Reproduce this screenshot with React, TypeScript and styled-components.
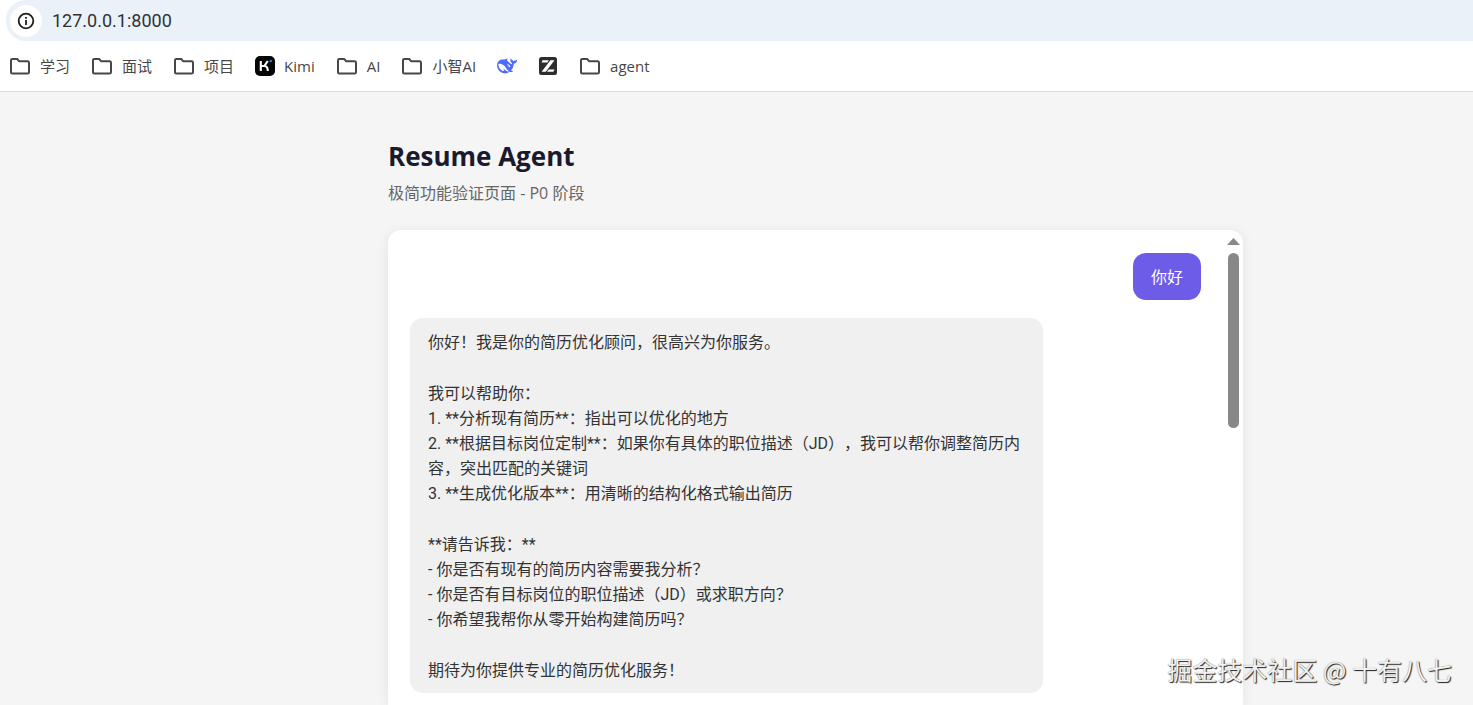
import React from "react";
import styled, { createGlobalStyle } from "styled-components";

const GlobalStyle = createGlobalStyle`
  *, *::before, *::after { box-sizing: border-box; }
  body {
    margin: 0;
    background: #f5f5f5;
    color: #333;
    font-family: "Open Sans", "Noto Sans CJK SC", sans-serif;
    font-size: 16px;
    line-height: 25px;
    text-spacing-trim: space-all;
  }
`;

const Page = styled.div`
  display: flex;
  flex-direction: column;
  height: 100vh;
  overflow: hidden;
`;

const AddressBar = styled.div`
  display: flex;
  align-items: center;
  gap: 10px;
  height: 41px;
  margin-left: 6px;
  padding-left: 4px;
  border-radius: 20px 0 0 20px;
  background: #ebf1f9;
`;

const Browser = styled.header`
  flex: none;
  background: #fff;
  border-bottom: 1px solid #dcdcdc;
`;

const InfoButton = styled.button`
  display: grid;
  place-items: center;
  width: 32px;
  height: 32px;
  padding: 0;
  border: 0;
  border-radius: 50%;
  background: #fff;
  color: #1f1f1f;
`;

const AddressInput = styled.input`
  flex: 1;
  min-width: 0;
  padding: 0;
  border: 0;
  outline: 0;
  background: transparent;
  color: #303236;
  font-family: Roboto, sans-serif;
  font-size: 18px;
`;

const Bookmarks = styled.nav`
  display: flex;
  align-items: center;
  gap: 21px;
  height: 50px;
  padding-left: 9px;
`;

const Bookmark = styled.a`
  display: flex;
  align-items: center;
  gap: 9px;
  color: #474747;
  font-size: 15px;
  text-decoration: none;
  white-space: nowrap;
`;

const Layout = styled.div`
  flex: 1;
  min-height: 0;
  display: grid;
  grid-template-columns: minmax(16px, 388px) minmax(0, 855px) minmax(16px, 1fr);
`;

const Main = styled.main`
  grid-column: 2;
  display: flex;
  flex-direction: column;
  min-height: 0;
  padding-top: 48px;
`;

const Title = styled.h1`
  margin: 0;
  color: #1a1a2e;
  font-size: 26px;
  line-height: 32px;
  font-weight: 700;
`;

const Subtitle = styled.p`
  margin: 9px 0 24px;
  color: #666;
`;

const ChatCard = styled.section`
  flex: 1;
  display: flex;
  min-height: 0;
  border-radius: 13px 13px 0 0;
  background: #fff;
  box-shadow: 0 2px 13px rgba(0, 0, 0, 0.08);
`;

const Messages = styled.div`
  flex: 1;
  min-width: 0;
  display: flex;
  flex-direction: column;
  gap: 18px;
  padding: 23px 22px 12px;
`;

const Bubble = styled.article<{ $own?: boolean }>`
  display: flex;
  flex-direction: column;
  gap: 26px;
  width: ${(p) => (p.$own ? "auto" : "80%")};
  align-self: ${(p) => (p.$own ? "flex-end" : "flex-start")};
  padding: 12px 18px 10px;
  border-radius: 13px;
  background: ${(p) => (p.$own ? "#6c5ce7" : "#f0f0f0")};
  color: ${(p) => (p.$own ? "#fff" : "#333")};
  font-family: Roboto, "Noto Sans CJK SC", sans-serif;
`;

const Paragraph = styled.p`
  margin: 0;
  white-space: pre-wrap;
`;

const ScrollTrack = styled.div`
  flex: none;
  width: 20px;
  display: flex;
  flex-direction: column;
  align-items: center;
  gap: 8px;
  padding-top: 8px;
`;

const ScrollThumb = styled.div`
  width: 11px;
  height: 175px;
  border-radius: 6px;
  background: #888;
`;

const Watermark = styled.div`
  position: absolute;
  right: 21px;
  bottom: 18px;
  color: #f0f0f0;
  font-family: "Noto Sans CJK SC", sans-serif;
  font-size: 25px;
  line-height: 36px;
  text-shadow: 1px 1px 1px #222, 0 0 1px #777;
  white-space: nowrap;
`;

const FolderIcon = () => (
  <svg width="22" height="18" viewBox="1 0 22 18" fill="none" stroke="#474747" strokeWidth="2" strokeLinejoin="round" aria-hidden="true">
    <path d="M3 3.2Q3 2 4.2 2H9.2L11.3 4.3H19.6Q21 4.3 21 5.7V15.3Q21 16.5 19.6 16.5H4.2Q3 16.5 3 15.3Z" />
  </svg>
);

const KimiIcon = () => (
  <svg width="20" height="20" viewBox="0 0 20 20" aria-hidden="true">
    <rect width="20" height="20" rx="5" fill="#050505" />
    <path d="M5.8 5V15M6.8 10H9.3L12.8 5M9.3 10Q12.8 10 12.8 15" fill="none" stroke="#fff" strokeWidth="2.1" />
    <circle cx="15.8" cy="5" r="1.2" fill="#2381f5" />
  </svg>
);

const WhaleIcon = () => (
  <svg width="20" height="20" viewBox="0 0 24 24" fill="#4d6bfe" aria-hidden="true">
    <path d="M23.748 4.482c-.254-.124-.364.113-.512.234-.051.039-.094.09-.137.136-.372.397-.806.657-1.373.626-.829-.046-1.537.214-2.163.848-.133-.782-.575-1.248-1.247-1.548-.352-.156-.708-.311-.955-.65-.172-.241-.219-.51-.305-.774-.055-.16-.11-.323-.293-.35-.2-.031-.278.136-.356.276-.313.572-.434 1.202-.422 1.84.027 1.436.633 2.58 1.838 3.393.137.093.172.187.129.323-.082.28-.18.552-.266.833-.055.179-.137.217-.329.14a5.526 5.526 0 0 1-1.736-1.18c-.857-.828-1.631-1.742-2.597-2.458a11.365 11.365 0 0 0-.689-.471c-.985-.957.13-1.743.388-1.836.27-.098.093-.432-.779-.428-.872.004-1.67.295-2.687.684a3.055 3.055 0 0 1-.465.137 9.597 9.597 0 0 0-2.883-.102c-1.885.21-3.39 1.102-4.497 2.623C.082 8.606-.231 10.684.152 12.85c.403 2.284 1.569 4.175 3.36 5.653 1.858 1.533 3.997 2.284 6.438 2.14 1.482-.085 3.133-.284 4.994-1.86.47.234.962.327 1.78.397.63.059 1.236-.03 1.705-.128.735-.156.684-.837.419-.961-2.155-1.004-1.682-.595-2.113-.926 1.096-1.296 2.746-2.642 3.392-7.003.05-.347.007-.565 0-.845-.004-.17.035-.237.23-.256a4.173 4.173 0 0 0 1.545-.475c1.396-.763 1.96-2.015 2.093-3.517.02-.23-.004-.467-.247-.588zM11.581 18c-2.089-1.642-3.102-2.183-3.52-2.16-.392.024-.321.471-.235.763.09.288.207.486.371.739.114.167.192.416-.113.603-.673.416-1.842-.14-1.897-.167-1.361-.802-2.5-1.86-3.301-3.307-.774-1.393-1.224-2.887-1.298-4.482-.02-.386.093-.522.477-.592a4.696 4.696 0 0 1 1.529-.039c2.132.312 3.946 1.265 5.468 2.774.868.86 1.525 1.887 2.202 2.891.72 1.066 1.494 2.082 2.48 2.914.348.292.625.514.891.677-.802.09-2.14.11-3.054-.614zm1-6.44a.306.306 0 0 1 .415-.287.302.302 0 0 1 .2.288.306.306 0 0 1-.31.307.303.303 0 0 1-.304-.308zm3.11 1.596c-.2.081-.399.151-.59.16a1.245 1.245 0 0 1-.798-.254c-.274-.23-.47-.358-.552-.758a1.73 1.73 0 0 1 .016-.588c.07-.327-.008-.537-.239-.727-.187-.156-.426-.199-.688-.199a.559.559 0 0 1-.254-.078c-.11-.054-.2-.19-.114-.358.028-.054.16-.186.192-.21.356-.202.767-.136 1.146.016.352.144.618.408 1.001.782.391.451.462.576.685.914.176.265.336.537.445.848.067.195-.019.354-.25.452z" />
  </svg>
);

const ZIcon = () => (
  <svg width="20" height="20" viewBox="0 0 20 20" aria-hidden="true">
    <rect x="1" y="1" width="18" height="18" rx="2.5" fill="#2d2d2d" />
    <path d="M4.5 4.3H10.8L9.3 6.6H3.6ZM12.4 4.3H16.5L7.8 15.8H3.6ZM10.8 13.4H16.5L15.4 15.8H9Z" fill="#fff" />
  </svg>
);

const bookmarks = [
  { label: "学习", icon: <FolderIcon /> },
  { label: "面试", icon: <FolderIcon /> },
  { label: "项目", icon: <FolderIcon /> },
  { label: "Kimi", icon: <KimiIcon /> },
  { label: "AI", icon: <FolderIcon /> },
  { label: "小智AI", icon: <FolderIcon /> },
  { name: "DeepSeek", icon: <WhaleIcon /> },
  { name: "Z.ai", icon: <ZIcon /> },
  { label: "agent", icon: <FolderIcon /> },
];

const reply = [
  "你好！我是你的简历优化顾问，很高兴为你服务。",
  "我可以帮助你：\n1. **分析现有简历**：指出可以优化的地方\n2. **根据目标岗位定制**：如果你有具体的职位描述（JD），我可以帮你调整简历内容，突出匹配的关键词\n3. **生成优化版本**：用清晰的结构化格式输出简历",
  "**请告诉我：**\n- 你是否有现有的简历内容需要我分析？\n- 你是否有目标岗位的职位描述（JD）或求职方向？\n- 你希望我帮你从零开始构建简历吗？",
  "期待为你提供专业的简历优化服务！",
];

export default function App() {
  return (
    <Page>
      <GlobalStyle />
      <Browser>
        <AddressBar>
          <InfoButton type="button" aria-label="Site information">
            <svg width="18" height="18" viewBox="0 0 18 18" fill="none" stroke="currentColor" strokeWidth="1.8" aria-hidden="true">
              <circle cx="9" cy="9" r="7.3" />
              <path d="M9 8V13M9 5V6.8" />
            </svg>
          </InfoButton>
          <AddressInput aria-label="Address" defaultValue="127.0.0.1:8000" />
        </AddressBar>
        <Bookmarks aria-label="Bookmarks">
          {bookmarks.map((b, i) => (
            <Bookmark key={i} href="#" aria-label={b.name}>
              {b.icon}
              {b.label}
            </Bookmark>
          ))}
        </Bookmarks>
      </Browser>
      <Layout>
        <Main>
          <Title>Resume Agent</Title>
          <Subtitle>极简功能验证页面 - P0 阶段</Subtitle>
          <ChatCard aria-label="Chat">
            <Messages>
              <Bubble $own>
                <Paragraph>你好</Paragraph>
              </Bubble>
              <Bubble>
                {reply.map((text) => (
                  <Paragraph key={text}>{text}</Paragraph>
                ))}
              </Bubble>
            </Messages>
            <ScrollTrack aria-hidden="true">
              <svg width="13" height="7" viewBox="0 0 13 7">
                <path d="M6.5 0L13 7H0Z" fill="#888" />
              </svg>
              <ScrollThumb />
            </ScrollTrack>
          </ChatCard>
        </Main>
      </Layout>
      <Watermark>掘金技术社区 @ 十有八七</Watermark>
    </Page>
  );
}
